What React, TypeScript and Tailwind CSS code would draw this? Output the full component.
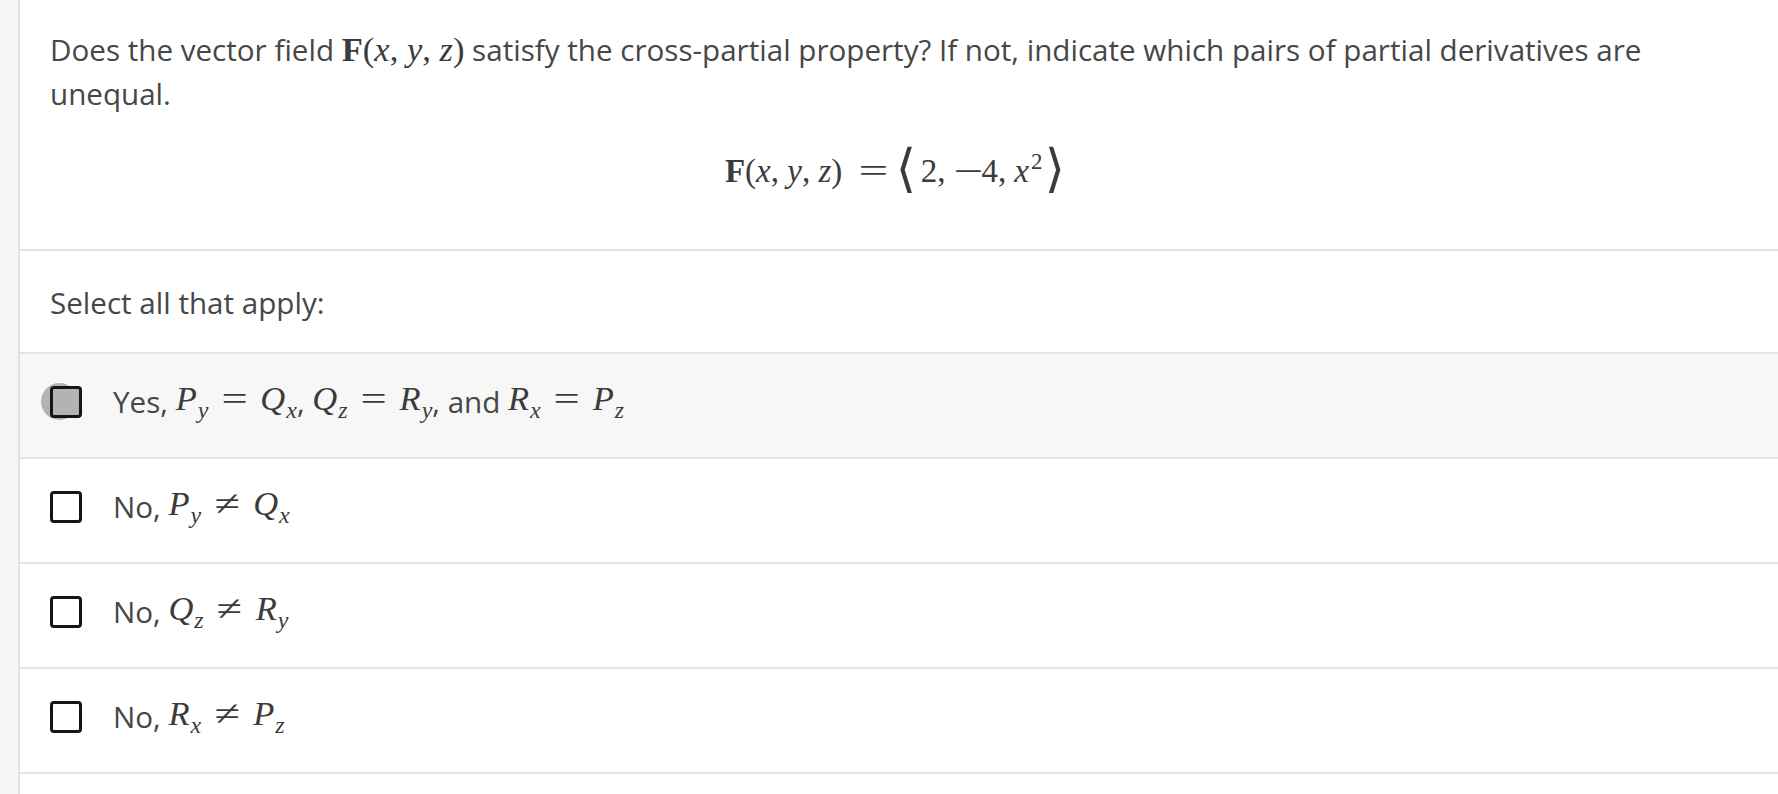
import type { ReactNode } from 'react';

// TYPES
type OptionProps = {
  lead: string;
  children: ReactNode;
  focused?: boolean;
};

// MATH HELPERS
const Math = ({ children, size = 'text-[34.5px]' }: { children: ReactNode; size?: string }) => (
  <span className={`font-['Liberation_Serif','Times_New_Roman',serif] ${size} leading-none text-[#3b3b3b] whitespace-nowrap`}>
    {children}
  </span>
);

const V = ({ children }: { children: ReactNode }) => <span className="italic">{children}</span>;

const Sub = ({ children }: { children: ReactNode }) => (
  <span className="ml-[1px] align-[-0.32em] text-[24px] italic">{children}</span>
);

const Rel = ({ children }: { children: ReactNode }) => (
  <span className="mx-[14px] inline-block w-[24px] text-center not-italic">
    <span className="inline-block scale-x-[1.35]">{children}</span>
  </span>
);

const Bracket = ({ children }: { children: ReactNode }) => (
  <span className="inline-block scale-x-[1.3] scale-y-[1.3] font-['DejaVu_Serif','DejaVu_Sans',serif] text-[40px] font-light">
    {children}
  </span>
);

const Sym = ({ base, sub }: { base: string; sub: string }) => (
  <span>
    <V>{base}</V>
    <Sub>{sub}</Sub>
  </span>
);

const Checkbox = ({ focused }: { focused?: boolean }) => (
  <span className="relative flex h-[32px] w-[32px] shrink-0">
    {focused && (
      <span className="absolute left-[-9px] top-[-3px] h-[37px] w-[37px] rounded-full bg-[#b3b3b3]" />
    )}
    <span
      className={`relative h-[32px] w-[32px] rounded-[4px] border-[3.5px] border-[#151515] ${
        focused ? 'bg-[#b3b3b3]' : 'bg-white'
      }`}
    />
  </span>
);

const Option = ({ lead, children, focused }: OptionProps) => (
  <div
    className={`flex items-center border-b-2 border-[#e3e3e3] pl-[30px] pt-[26px] pb-[34px] ${
      focused ? 'bg-[#f7f7f7]' : 'bg-white'
    }`}
  >
    <Checkbox focused={focused} />
    <div className="ml-[31px] flex h-[43px] items-center whitespace-pre">
      <span>{lead}</span>
      {children}
    </div>
  </div>
);

// MARKUP
export default function App() {
  return (
    <div className="flex min-h-screen bg-white font-['Open_Sans','Liberation_Sans',sans-serif] text-[29.6px] leading-[44px] text-[#474747]">
      <div className="w-[20px] shrink-0 border-r-2 border-[#e2e2e2] bg-[#f5f5f5]" />

      <div className="flex-1">
        <section className="border-b-2 border-[#e3e3e3] pl-[30px] pr-[40px] pt-[28px] pb-[57px]">
          <p>
            Does the vector field{' '}
            <Math>
              <span className="font-bold">F</span>(<V>x</V>, <V>y</V>, <V>z</V>)
            </Math>{' '}
            satisfy the cross-partial property? If not, indicate which pairs of partial derivatives are
            unequal.
          </p>
          <div className="mt-[28px] flex h-[48px] items-center justify-center">
            <Math size="text-[33px]">
              <span className="font-bold">F</span>(<V>x</V>, <V>y</V>, <V>z</V>)
              <span className="ml-[18px] inline-block w-[26px] text-center">
                <span className="inline-block scale-x-[1.6]">=</span>
              </span>
              <span className="ml-[12px] mr-[7px]">
                <Bracket>⟨</Bracket>
              </span>
              2,
              <span className="ml-[10px] inline-block w-[26px] text-center">
                <span className="inline-block scale-x-[1.6]">−</span>
              </span>
              4,
              <span className="ml-[8px]">
                <V>x</V>
              </span>
              <span className="ml-[2px] align-[0.55em] text-[23px]">2</span>
              <span className="ml-[5px]">
                <Bracket>⟩</Bracket>
              </span>
            </Math>
          </div>
        </section>

        <section className="border-b-2 border-[#e3e3e3] pl-[30px] pt-[30px] pb-[27px]">
          <p>Select all that apply:</p>
        </section>

        <Option lead="Yes, " focused>
          <Math>
            <Sym base="P" sub="y" />
            <Rel>=</Rel>
            <Sym base="Q" sub="x" />
          </Math>
          <span>, </span>
          <Math>
            <Sym base="Q" sub="z" />
            <Rel>=</Rel>
            <Sym base="R" sub="y" />
          </Math>
          <span>, and </span>
          <Math>
            <Sym base="R" sub="x" />
            <Rel>=</Rel>
            <Sym base="P" sub="z" />
          </Math>
        </Option>

        <Option lead="No, ">
          <Math>
            <Sym base="P" sub="y" />
            <Rel>≠</Rel>
            <Sym base="Q" sub="x" />
          </Math>
        </Option>

        <Option lead="No, ">
          <Math>
            <Sym base="Q" sub="z" />
            <Rel>≠</Rel>
            <Sym base="R" sub="y" />
          </Math>
        </Option>

        <Option lead="No, ">
          <Math>
            <Sym base="R" sub="x" />
            <Rel>≠</Rel>
            <Sym base="P" sub="z" />
          </Math>
        </Option>
      </div>
    </div>
  );
}
